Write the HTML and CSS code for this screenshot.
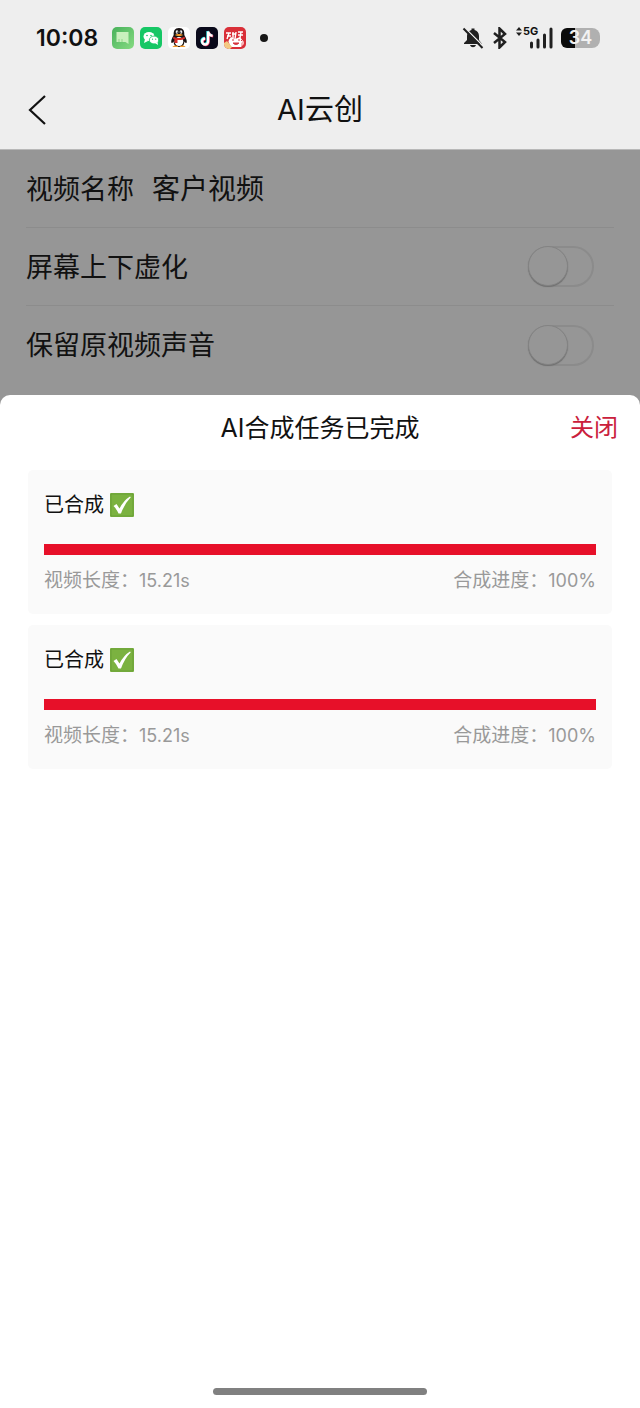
FILE: index.html
```html
<!DOCTYPE html>
<html lang="zh-CN">
<head>
<meta charset="utf-8">
<meta name="viewport" content="width=device-width, initial-scale=1">
<title>AI云创</title>
<link rel="stylesheet" href="styles.css">
</head>
<body>
<div class="screen">
  <div class="status">
    <time class="clock">10:08</time>
    <div class="apps">
      <svg class="app" viewBox="0 0 22 22"><defs><linearGradient id="msg" x2="1" y2="1"><stop stop-color="#47b15a"/><stop offset="1" stop-color="#86db82"/></linearGradient></defs><rect width="22" height="22" rx="5" fill="url(#msg)"/><path d="M4.500 5h12v12l-3-2h-9z" fill="#c9f0bd"/><path d="M7 12v3M10 12v3" stroke="#8fd58a"/></svg>
      <svg class="app" viewBox="0 0 22 22"><rect width="22" height="22" rx="5" fill="#16c765"/><ellipse cx="9" cy="9.500" rx="5.500" ry="4.500" fill="#fff"/><path d="M5 12l-1 4 4-2z" fill="#fff"/><ellipse cx="14" cy="13" rx="4.700" ry="3.900" fill="#fff" stroke="#16c765" stroke-width=".8"/><path d="M15 16l3 2-.5-3z" fill="#fff"/><g fill="#16c765"><circle cx="7" cy="8.500" r=".8"/><circle cx="11" cy="8.500" r=".8"/><circle cx="12.500" cy="12.200" r=".6"/><circle cx="15.700" cy="12.200" r=".6"/></g></svg>
      <svg class="app" viewBox="0 0 22 22"><rect width="22" height="22" rx="5" fill="#fff"/><path d="M11 1C6.500 1 5.500 4 5.700 8 4 11 2.500 14 3.500 16c.7.500 1.500-1 2-1.500C6 19 8 20 11 20s5-1 5.500-5.500c.5.500 1.300 2 2 1.500 1-2-.5-5-2.200-8 .2-4-.8-7-5.300-7z" fill="#191314"/><ellipse cx="11" cy="14.500" rx="4.300" ry="4.500" fill="#fff"/><path d="M5.500 9.500c3 2 8 2 11 0l.5 2c-3 2-9 2-12 0z" fill="#d92b27"/><path d="M6.500 11.500h3V16h-3z" fill="#d92b27"/><ellipse cx="9" cy="5" rx="1.300" ry="1.700" fill="#fff"/><ellipse cx="13" cy="5" rx="1.300" ry="1.700" fill="#fff"/><circle cx="9.300" cy="5.200" r=".6"/><circle cx="12.700" cy="5.200" r=".6"/><path d="M7 8c2-1.300 6-1.300 8 0-2 1.500-6 1.500-8 0zM4.500 20c1-2 5-2 6 0zm7 0c1-2 5-2 6 0z" fill="#f49a2a"/></svg>
      <svg class="app" viewBox="0 0 22 22"><rect width="22" height="22" rx="5" fill="#09091a"/><g fill="none" stroke-width="2.400"><path d="M11.500 4v10a3 3 0 1 1-3-3M11.500 4c.5 3 2 4 4.500 4.200" stroke="#29dce0"/><path d="M12.700 5v10a3 3 0 1 1-3-3M12.700 5c.5 3 2 4 4.500 4.200" stroke="#e9345c"/><path d="M12.100 4.500v10a3 3 0 1 1-3-3M12.100 4.500c.5 3 2 4 4.500 4.200" stroke="#fff"/></g></svg>
      <svg class="app" viewBox="0 0 22 22"><rect width="22" height="22" rx="5" fill="#d92f38"/><path d="M2 6h5M3 9h4M5 6l-2 6M9 5v6M8 7h4M12 5l-1 7M14 5h5M14 8h5M17 5l-1 6" fill="none" stroke="#fff" stroke-width="1.400"/><path d="M4 14l3-4 4 2 5-2 3 4-2 6H7z" fill="#fff"/><path d="M8 13h2M14 13h2M9 16c2 2 4 2 6 0zM2 13l3 1M19 12l-2 2" fill="#d6363f" stroke="#d6363f"/><path d="M0 16l3-2 5 6-2 2H5a5 5 0 0 1-5-5z" fill="#f3ca83"/><path d="M17 16l3-2v3l-3 3z" fill="#f6b4b7"/></svg>
      <span class="more-dot"></span>
    </div>
    <div class="signals">
      <svg class="bell" viewBox="0 0 22 22"><path d="M2 16l3-3V9c0-3.500 2-5.500 4.500-6V1.500h3V3C15 3.500 17 5.500 17 9v4l3 4H2zM8 18h6c-1 3-5 3-6 0z" fill="#202020"/><path d="M3.500 1.500L22 20" stroke="#eee" stroke-width="1.500"/><path d="M1.500 1.500L20.500 21" stroke="#202020" stroke-width="2"/></svg>
      <svg class="bluetooth" viewBox="0 0 16 22"><path d="M2 6l11 9-5.500 5.500v-19L13 7 2 16" fill="none" stroke="#202020" stroke-width="2.500"/></svg>
      <div class="cellular">
        <svg class="arrows" viewBox="0 0 6 9"><path d="M3 0l3 3.500H0zM3 9l3-3.500H0z" fill="#202020"/></svg>
        <span class="network">5G</span>
        <svg class="bars" viewBox="0 0 23 22"><path d="M1.500 20v-4M8 20v-7M14.500 20V8M21 20V2" stroke="#202020" stroke-width="3" stroke-linecap="round"/></svg>
      </div>
      <span class="battery">34</span>
    </div>
  </div>

  <header class="nav">
    <button class="back" aria-label="返回"><svg viewBox="0 0 18 30"><path d="M17 1L2 15l15 14" fill="none" stroke="#111" stroke-width="2.200"/></svg></button>
    <h1 class="nav-title">AI云创</h1>
  </header>

  <form class="form">
    <div class="row"><label for="name">视频名称</label><input class="name" id="name" type="text" value="客户视频"></div>
    <div class="row"><label for="blur">屏幕上下虚化</label><input class="switch" id="blur" type="checkbox"></div>
    <div class="row"><label for="sound">保留原视频声音</label><input class="switch" id="sound" type="checkbox"></div>
  </form>

  <section class="sheet">
    <header class="sheet-head">
      <h2 class="sheet-title">AI合成任务已完成</h2>
      <button class="close">关闭</button>
    </header>
    <div class="tasks">
      <article class="task">
        <h3 class="task-title">已合成 <svg class="done" viewBox="0 0 24 24"><rect width="24" height="24" rx="1" fill="#7bb240"/><path d="M1 1h22v22H1z" fill="none" stroke="#629a35" stroke-width=".7"/><path d="M3.500 13l3-2 3 4.500Q14 7 20 3.500l.8.700Q14.500 10.500 11 20.500H8.500Q6.500 16 3.500 13z" fill="#fff"/></svg></h3>
        <div class="track"><div class="fill" style="width:100%"></div></div>
        <div class="facts"><span>视频长度：<span class="number">15.21s</span></span><span>合成进度：<span class="number">100%</span></span></div>
      </article>
      <article class="task">
        <h3 class="task-title">已合成 <svg class="done" viewBox="0 0 24 24"><rect width="24" height="24" rx="1" fill="#7bb240"/><path d="M1 1h22v22H1z" fill="none" stroke="#629a35" stroke-width=".7"/><path d="M3.500 13l3-2 3 4.500Q14 7 20 3.500l.8.700Q14.500 10.500 11 20.500H8.500Q6.500 16 3.500 13z" fill="#fff"/></svg></h3>
        <div class="track"><div class="fill" style="width:100%"></div></div>
        <div class="facts"><span>视频长度：<span class="number">15.21s</span></span><span>合成进度：<span class="number">100%</span></span></div>
      </article>
    </div>
    <div class="home-bar"></div>
  </section>
</div>
</body>
</html>
```
FILE: styles.css
```css
*, *::before { box-sizing: border-box; }
body {
  margin: 0;
  font-family: Inter, "Noto Sans CJK SC", sans-serif;
  color: #111;
}
h1, h2, h3 { margin: 0; font-weight: 400; }
button, input { font: inherit; color: inherit; background: none; border: 0; padding: 0; margin: 0; }
svg { display: block; flex: none; }

.screen { min-height: 100vh; display: flex; flex-direction: column; background: #969696; }

.status {
  height: 76px;
  padding: 0 40px 0 36px;
  display: flex;
  align-items: center;
  background: #eee;
}
.clock { font-size: 23px; font-weight: 600; }
.apps { display: flex; align-items: center; gap: 6px; margin-left: 14px; }
.app { width: 22px; height: 22px; }
.more-dot { width: 8px; height: 8px; margin-left: 8px; border-radius: 50%; background: #161616; }
.signals { display: flex; align-items: center; gap: 8px; margin-left: auto; }
.bell { width: 22px; height: 22px; }
.bluetooth { width: 16px; height: 22px; }
.cellular { position: relative; width: 37px; height: 22px; display: flex; justify-content: flex-end; }
.bars { width: 23px; height: 22px; }
.arrows { position: absolute; left: 0; top: 0; width: 6px; height: 9px; }
.network { position: absolute; left: 7px; top: -2px; font-size: 11px; line-height: 12px; font-weight: 700; }
.battery {
  width: 39px;
  height: 20px;
  border-radius: 6px 8px 8px 6px;
  background: linear-gradient(90deg, #0b0b0b 14px, #b0b0b0 14px);
  color: #f2f2f2;
  font-size: 18px;
  line-height: 20px;
  font-weight: 600;
  text-align: center;
}

.nav {
  height: 74px;
  padding: 0 28px 6px;
  display: grid;
  grid-template-columns: 1fr auto 1fr;
  align-items: center;
  background: #eee;
  border-bottom: 1px solid #b8b8b8;
}
.back { width: 18px; height: 30px; }
.back svg { width: 18px; height: 30px; }
.nav-title { font-size: 29px; line-height: 40px; }

.form { height: 245px; padding: 0 26px; font-size: 27px; }
.row {
  height: 78px;
  display: flex;
  align-items: center;
  border-bottom: 1px solid #8c8c8c;
}
.row:last-child { border-bottom: 0; }
.row label, .name { padding-bottom: 3px; }
.name { flex: 1; min-width: 0; margin-left: 18px; font-size: 28px; }
.switch {
  appearance: none;
  width: 66px;
  height: 41px;
  margin: 0 20px 0 auto;
  border: 2px solid #8b8b8b;
  border-radius: 21px;
}
.switch::before {
  content: "";
  display: block;
  width: 40px;
  height: 40px;
  margin: -2px;
  border-radius: 50%;
  border: 1px solid #838383;
  background: #969696;
  box-shadow: 0 1px 1px #707070;
}
.switch:checked::before { margin-left: 23px; }

.sheet {
  flex: 1;
  display: flex;
  flex-direction: column;
  background: #fff;
  border-radius: 10px 10px 0 0;
}
.sheet-head {
  height: 75px;
  padding: 0 22px 10px;
  display: grid;
  grid-template-columns: 1fr auto 1fr;
  align-items: center;
}
.sheet-title { grid-column: 2; font-size: 25px; line-height: 36px; }
.close { justify-self: end; font-size: 24px; line-height: 36px; color: #ca203c; }
.tasks { padding: 0 28px; display: flex; flex-direction: column; gap: 11px; }
.task { padding: 20px 16px; border-radius: 5px; background: #fafafa; }
.task-title { display: flex; align-items: center; gap: 6px; font-size: 20px; line-height: 30px; }
.done { width: 24px; height: 24px; }
.track { height: 11px; margin: 24px 0 12px; background: #e5e5e5; }
.fill { height: 100%; background: #e71029; }
.facts { display: flex; justify-content: space-between; font-size: 19px; line-height: 27px; color: #999; }
.number { font-size: 18px; }
.home-bar { width: 33.3%; height: 7px; margin: auto auto 13px; border-radius: 4px; background: #808080; }
```
